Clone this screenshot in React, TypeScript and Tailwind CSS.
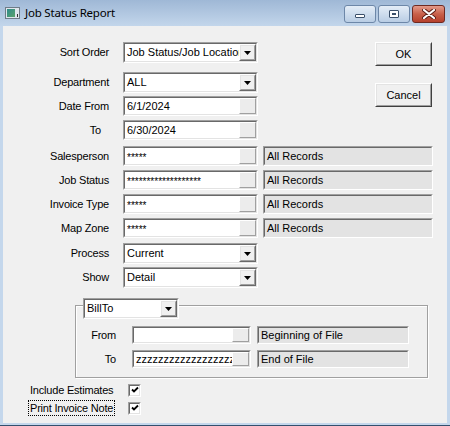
import type { ReactNode } from "react";

const font = "font-['Liberation_Sans',Arial,sans-serif] text-[11px] leading-none text-black";

function Sunken({
  className = "",
  face = "bg-white",
  children,
}: {
  className?: string;
  face?: string;
  children?: ReactNode;
}) {
  return (
    <div
      className={`shrink-0 border border-t-[#a0a0a0] border-l-[#a0a0a0] border-b-white border-r-white ${className}`}
    >
      <div
        className={`flex h-full items-center overflow-hidden border border-t-[#696969] border-l-[#696969] border-b-[#e3e3e3] border-r-[#e3e3e3] ${face}`}
      >
        {children}
      </div>
    </div>
  );
}

function Raised({ className = "", children }: { className?: string; children?: ReactNode }) {
  return (
    <div
      className={`shrink-0 border border-t-white border-l-white border-b-[#696969] border-r-[#696969] ${className}`}
    >
      <div className="flex h-full items-center justify-center border border-t-[#e3e3e3] border-l-[#e3e3e3] border-b-[#a0a0a0] border-r-[#a0a0a0] bg-[#f0f0f0]">
        {children}
      </div>
    </div>
  );
}

function Combo({ value, className }: { value: string; className: string }) {
  return (
    <Sunken className={className}>
      <span className="flex-1 overflow-hidden whitespace-nowrap pl-[2px]">{value}</span>
      <Raised className="h-full w-[17px]">
        <svg width="7" height="4" viewBox="0 0 7 4">
          <polygon points="0,0 7,0 3.5,4" fill="#000" />
        </svg>
      </Raised>
    </Sunken>
  );
}

function Edit({ value, className, stars }: { value: string; className: string; stars?: boolean }) {
  return (
    <Sunken className={className}>
      <span className="flex-1 overflow-hidden whitespace-nowrap pl-[2px]">
        {stars ? <span className="inline-block translate-y-[1px] text-[10px]">{value}</span> : value}
      </span>
      <div className="h-full w-[17px] shrink-0 border border-t-white border-l-white border-b-[#a0a0a0] border-r-[#a0a0a0] bg-[#ececec]" />
    </Sunken>
  );
}

function Label({ text, className = "w-[106px]" }: { text: string; className?: string }) {
  return (
    <div className={`shrink-0 whitespace-nowrap text-right tracking-[-0.2px] ${className}`}>{text}</div>
  );
}

function Button({ text, className = "" }: { text: string; className?: string }) {
  return (
    <div
      className={`h-[24px] w-[57px] shrink-0 border border-t-white border-l-white border-b-[#404040] border-r-[#404040] ${className}`}
    >
      <div className="flex h-full items-center justify-center border border-t-[#e3e3e3] border-l-[#e3e3e3] border-b-[#a0a0a0] border-r-[#a0a0a0] bg-[#f0f0f0]">
        <span>{text}</span>
      </div>
    </div>
  );
}

function Check() {
  return (
    <Sunken className="h-[13px] w-[13px]">
      <svg width="11" height="11" viewBox="0 0 11 11" className="shrink-0">
        <polyline points="2,4.5 4,6.5 8,2.5" fill="none" stroke="#000" strokeWidth="1.8" />
      </svg>
    </Sunken>
  );
}

const lookupRows = [
  { label: "Salesperson", value: "*****" },
  { label: "Job Status", value: "*******************" },
  { label: "Invoice Type", value: "*****" },
  { label: "Map Zone", value: "*****" },
];

export default function App() {
  return (
    <div className="flex h-[426px] w-[450px] flex-col border-b border-b-[#34506e] bg-[#c4d7ec]">
      {/* title bar */}
      <div className="flex h-[26px] shrink-0 items-center bg-linear-to-b from-[#9fb8d6] to-[#c3d6eb] pl-[5px] pr-[5px]">
        <div className="flex h-[12px] w-[15px] items-end border border-[#6f7c88] bg-[#dfe6ec] p-[1px]">
          <div className="h-[8px] w-[9px] bg-linear-to-br from-[#2d8a8a] to-[#5aa36a]" />
          <div className="ml-[2px] h-[3px] w-[1px] bg-[#333]" />
        </div>
        <span className="ml-[5px] font-['Noto_Sans',sans-serif] text-[11.5px] tracking-[-0.2px] text-black">
          Job Status Report
        </span>
        <div className="ml-auto flex items-center gap-[2px] self-start pt-[5px]">
          <div className="flex h-[18px] w-[32px] items-end justify-center rounded-[3px] border border-[#6d87a8] bg-linear-to-b from-[#e4edf7] to-[#b9cde4] pb-[4px]">
            <div className="h-[4px] w-[10px] rounded-[1px] border border-[#3a4f6a] bg-white" />
          </div>
          <div className="flex h-[18px] w-[32px] items-center justify-center rounded-[3px] border border-[#6d87a8] bg-linear-to-b from-[#e4edf7] to-[#b9cde4]">
            <div className="h-[8px] w-[10px] rounded-[1px] border border-[#3a4f6a] bg-white p-[2px]">
              <div className="h-full w-full border border-[#3a4f6a]" />
            </div>
          </div>
          <div className="flex h-[18px] w-[33px] items-center justify-center rounded-[3px] border border-[#6e2a22] bg-linear-to-b from-[#e39a8a] via-[#c8604a] to-[#b5402c]">
            <svg width="14" height="10" viewBox="0 0 14 10">
              <path d="M2 1 L12 9 M12 1 L2 9" stroke="#5a1d15" strokeWidth="4" strokeLinecap="round" />
              <path d="M2 1 L12 9 M12 1 L2 9" stroke="#fff" strokeWidth="2.2" strokeLinecap="round" />
            </svg>
          </div>
        </div>
      </div>

      {/* client */}
      <div className={`mx-[3px] mb-[2px] flex-1 bg-[#f0f0f0] ${font}`}>
        <div className="flex">
          <div className="flex flex-col">
            <div className="mt-[16px] flex h-[21px] items-center gap-[14px]">
              <Label text="Sort Order" />
              <Combo value="Job Status/Job Location" className="h-[21px] w-[135px]" />
            </div>
            <div className="mt-[9px] flex h-[21px] items-center gap-[14px]">
              <Label text="Department" />
              <Combo value="ALL" className="h-[21px] w-[135px]" />
            </div>
            <div className="mt-[3px] flex h-[20px] items-center gap-[14px]">
              <Label text="Date From" />
              <Edit value="6/1/2024" className="h-[20px] w-[135px]" />
            </div>
            <div className="mt-[4px] flex h-[20px] items-center gap-[14px]">
              <Label text="To" className="w-[106px] pr-[8px]" />
              <Edit value="6/30/2024" className="h-[20px] w-[135px]" />
            </div>
          </div>
          <div className="ml-[117px] flex flex-col">
            <Button text="OK" className="mt-[16px]" />
            <Button text="Cancel" className="mt-[17px]" />
          </div>
        </div>

        <div className="mt-[6px] flex flex-col gap-[4px]">
          {lookupRows.map((r) => (
            <div key={r.label} className="flex h-[20px] items-center gap-[14px]">
              <Label text={r.label} />
              <div className="flex items-center gap-[5px]">
                <Edit value={r.value} stars className="h-[20px] w-[135px]" />
                <Sunken className="h-[20px] w-[170px]" face="bg-[#e3e3e3]">
                  <span className="pl-[2px]">All Records</span>
                </Sunken>
              </div>
            </div>
          ))}
        </div>

        <div className="mt-[5px] flex h-[21px] items-center gap-[14px]">
          <Label text="Process" />
          <Combo value="Current" className="h-[21px] w-[135px]" />
        </div>
        <div className="mt-[3px] flex h-[21px] items-center gap-[14px]">
          <Label text="Show" />
          <Combo value="Detail" className="h-[21px] w-[135px]" />
        </div>

        {/* group box */}
        <div className="ml-[72px] mt-[17px] h-[73px] w-[353px] border border-[#a0a0a0] shadow-[inset_1px_1px_0_#fff,1px_1px_0_#fff]">
          <div className="-mt-[8px] ml-[7px] w-[96px] bg-[#f0f0f0]">
            <Combo value="BillTo" className="h-[21px] w-[96px]" />
          </div>
          <div className="mt-[7px] flex h-[18px] items-center">
            <Label text="From" className="w-[40px]" />
            <Edit value="" className="ml-[16px] h-[18px] w-[119px]" />
            <Sunken className="ml-[6px] h-[18px] w-[152px]" face="bg-[#e3e3e3]">
              <span className="pl-[2px]">Beginning of File</span>
            </Sunken>
          </div>
          <div className="mt-[6px] flex h-[18px] items-center">
            <Label text="To" className="w-[40px]" />
            <Edit value="zzzzzzzzzzzzzzzzzzzz" className="ml-[16px] h-[18px] w-[119px]" />
            <Sunken className="ml-[6px] h-[18px] w-[152px]" face="bg-[#e3e3e3]">
              <span className="pl-[2px]">End of File</span>
            </Sunken>
          </div>
        </div>

        <div className="ml-[25px] mt-[6px] flex h-[13px] items-center tracking-[-0.2px]">
          <div className="w-[87px] whitespace-nowrap border border-transparent px-[1px]">Include Estimates</div>
          <div className="ml-[13px]">
            <Check />
          </div>
        </div>
        <div className="ml-[25px] mt-[3px] flex h-[16px] items-center tracking-[-0.2px]">
          <div className="flex h-[16px] w-[87px] items-center whitespace-nowrap border border-dotted border-black px-[1px]">
            Print Invoice Note
          </div>
          <div className="ml-[13px]">
            <Check />
          </div>
        </div>
      </div>
    </div>
  );
}
